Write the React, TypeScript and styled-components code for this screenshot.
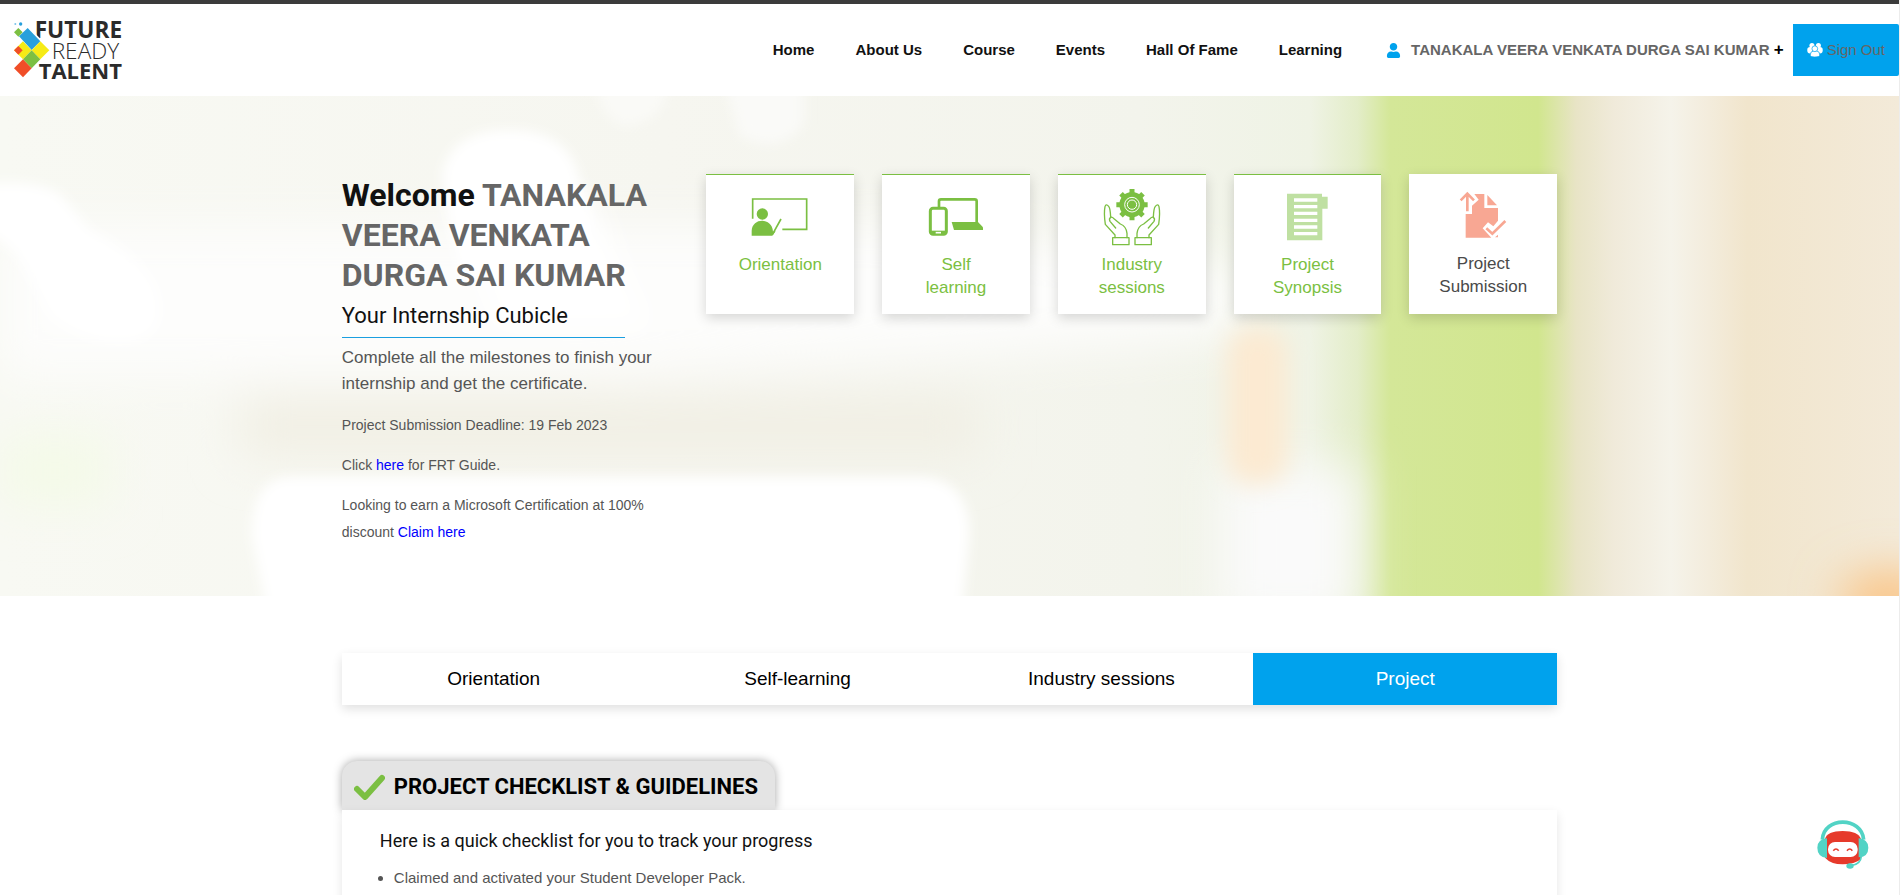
import React from "react";
import styled, { createGlobalStyle } from "styled-components";
import { FaUser } from "react-icons/fa";

const blue = "#00a2ed";
const green = "#7bbf42";

const GlobalStyle = createGlobalStyle`
  *, *::before, *::after { box-sizing: border-box; }
  html { overflow: hidden; }
  body {
    margin: 0;
    background: #fff;
    color: #555;
    font-family: "Liberation Sans", Arial, sans-serif;
    font-size: 14px;
  }
  h1, h2, h3, p, ul { margin: 0; }
  a { text-decoration: none; }
`;

const Page = styled.div`
  border-right: 1px solid #ececec;
`;

const Header = styled.header`
  display: flex;
  align-items: center;
  height: 96px;
  padding-left: 14px;
  background: #fff;
  border-top: 4px solid #3b3b3b;
`;

const LogoLink = styled.a`
  display: block;
  height: 58px;
  margin-right: auto;
  svg { overflow: visible; }
`;

const Nav = styled.nav`
  display: flex;
  gap: 41px;
  margin-right: 44px;
`;

const NavLink = styled.a`
  color: #111;
  font-size: 15px;
  font-weight: 700;
  line-height: 20px;
`;

const Account = styled.button`
  display: flex;
  align-items: center;
  gap: 4px;
  margin-right: 9px;
  padding: 0;
  border: 0;
  background: none;
  color: #666;
  font: 700 15px/20px "Liberation Sans", Arial, sans-serif;
  svg { margin-right: 6px; }
`;

const Plus = styled.span`
  color: #000;
  font-size: 17px;
`;

const SignOut = styled.button`
  display: flex;
  align-items: center;
  gap: 4px;
  height: 52px;
  padding: 0 14px;
  border: 0;
  border-radius: 0 2px 2px 0;
  background: ${blue};
  color: #666;
  font: 15px/20px "Liberation Sans", Arial, sans-serif;
`;

const Hero = styled.section`
  position: relative;
  min-height: 500px;
  padding-top: 78px;
  overflow: hidden;
`;

const Backdrop = styled.svg`
  position: absolute;
  inset: 0;
  width: 100%;
  height: 100%;
`;

const Container = styled.div`
  width: 64%;
  margin: 0 auto;
`;

const HeroRow = styled(Container)`
  position: relative;
  display: grid;
  grid-template-columns: 3fr 7fr;
  align-items: start;
`;

const Intro = styled.div`
  padding: 1px 48px 0 0;
`;

const Welcome = styled.h1`
  color: #666;
  font: 700 32px/40px Roboto, sans-serif;
  span { color: #111; }
`;

const Subtitle = styled.h2`
  width: 283px;
  padding: 7px 0;
  border-bottom: 1px solid #1a9fe0;
  color: #111;
  font: 400 22px/28px Roboto, sans-serif;
`;

const Lead = styled.p`
  padding: 7px 0 15px;
  font-size: 17px;
  line-height: 26px;
  white-space: nowrap;
`;

const Note = styled.p`
  margin-bottom: 13px;
  font-size: 14px;
  line-height: 27px;
  a { color: #00f; }
`;

const Cards = styled.div`
  display: grid;
  grid-template-columns: repeat(5, 1fr);
  gap: 28px;
`;

const Card = styled.a<{ $done: boolean }>`
  display: flex;
  flex-direction: column;
  align-items: center;
  height: 140px;
  padding-top: 13px;
  border-top: ${(p) => (p.$done ? `1px solid ${green}` : "0")};
  background: #fff;
  box-shadow: 0 4px 12px rgba(0, 0, 0, 0.16);
  color: ${(p) => (p.$done ? green : "#4a4a4a")};
  font-size: 17px;
  line-height: 23px;
  text-align: center;
  svg { margin-bottom: 7px; }
`;

const CardLabel = styled.span`
  width: 90px;
`;

const Tabs = styled(Container)`
  display: grid;
  grid-template-columns: repeat(4, 1fr);
  margin-top: 57px;
  box-shadow: 0 4px 10px rgba(0, 0, 0, 0.12);
`;

const Tab = styled.button<{ $active?: boolean }>`
  height: 52px;
  padding: 0;
  border: 0;
  background: ${(p) => (p.$active ? blue : "#fff")};
  color: ${(p) => (p.$active ? "#fff" : "#000")};
  font: 19px/24px "Liberation Sans", Arial, sans-serif;
`;

const Checklist = styled(Container)`
  margin-top: 56px;
`;

const ChecklistTitle = styled.h2`
  display: flex;
  align-items: center;
  gap: 9px;
  width: 433px;
  height: 49px;
  padding: 3px 0 0 12px;
  border-radius: 15px 15px 0 0;
  background: #e4e4e4;
  box-shadow: 0 0 10px rgba(0, 0, 0, 0.35);
  color: #000;
  font: 700 22px/28px Roboto, sans-serif;
  white-space: nowrap;
`;

const Panel = styled.div`
  position: relative;
  padding: 18px 38px 40px;
  background: #fff;
  box-shadow: 0 4px 10px rgba(0, 0, 0, 0.1);
`;

const PanelTitle = styled.h3`
  color: #111;
  font: 400 18px/26px Roboto, sans-serif;
`;

const List = styled.ul`
  padding: 11px 0 0 14px;
  font-size: 15px;
  line-height: 26px;
`;

const ChatButton = styled.button`
  position: fixed;
  right: 31px;
  bottom: 24px;
  width: 52px;
  height: 52px;
  padding: 0;
  border: 0;
  background: none;
`;

const Logo = () => (
  <svg width="108" height="58" viewBox="42 66 324 174" role="img" aria-label="Future Ready Talent">
    <g fill="#2b2b2b" fontFamily="'Open Sans', sans-serif">
      <text x="104" y="118" fontSize="68" fontWeight="700">FUTURE</text>
      <text x="155" y="179" fontSize="68" fontWeight="300">READY</text>
      <text x="116" y="239" fontSize="66" fontWeight="700">TALENT</text>
    </g>
    <path d="M83 80 155 154 69 242 34 208Z" fill="#fff" />
    <path d="m83 87 38 40-26 26-38-41z" fill="#28a0dc" />
    <path d="m121 127 27 27-27 27-26-27z" fill="#f6eb16" />
    <path d="m69 127 26 27-26 27-27-27z" fill="#f6eb16" />
    <path d="m55 141 13 13-13 13-13-13z" fill="#f04e28" />
    <path d="m95 154 26 27-26 27-26-27z" fill="#7cbf42" />
    <path d="m69 181 26 27-26 27-27-27z" fill="#f04e28" />
    <path d="m55 87 13 13-13 13-13-13z" fill="#7cbf42" />
    <circle cx="62" cy="75" r="5" fill="#28a0dc" />
    <circle cx="46" cy="75" r="3" fill="#7cc4ea" />
  </svg>
);

const PeopleIcon = () => (
  <svg width="16" height="14" viewBox="0 0 43 39" fill="#fff" aria-hidden="true">
    <circle cx="13" cy="7" r="7" />
    <circle cx="31" cy="7" r="7" />
    <rect x="0" y="11" width="21" height="18" rx="8" />
    <rect x="22" y="11" width="21" height="18" rx="8" />
    <g stroke={blue} strokeWidth="2">
      <path d="M8 34Q8 23 18 22H26Q35 23 35 34Q34 39 21 39Q9 39 8 34Z" />
      <circle cx="21" cy="16" r="8" />
    </g>
  </svg>
);

const OrientationIcon = () => (
  <svg width="60" height="58" viewBox="181 84 180 174" fill="none" stroke={green} strokeWidth="5">
    <path d="M189 176V117H351V208H278M248 224 274 177" />
    <g fill={green} stroke="none">
      <circle cx="218" cy="162" r="17" />
      <path d="M186 227V212C188 172 248 172 250 215L258 214 248 227Z" />
    </g>
  </svg>
);

const DevicesIcon = () => (
  <svg width="60" height="58" viewBox="708 84 180 174" fill="none" stroke={green}>
    <path d="M747 145V124Q747 118 753 118H854Q860 118 860 124V188" strokeWidth="8" />
    <rect x="721" y="145" width="48" height="78" rx="8" strokeWidth="9" />
    <path d="M721 212H769V223H721Z" fill={green} stroke="none" />
    <path d="M737 218H753" stroke="#fff" strokeWidth="5" />
    <path d="M785 186H864L879 202V210H792Z" fill={green} stroke="none" />
  </svg>
);

const Hand = () => (
  <g fill="none" stroke={green} strokeWidth="4" strokeLinejoin="round" strokeLinecap="round">
    <path d="M1268 233H1317V254H1268Z" />
    <path d="M1275 233V225L1246 193Q1241 160 1245 140Q1248 130 1256 139Q1261 145 1262 172Q1266 170 1272 176L1291 192Q1309 199 1311 220V233" />
    <path d="M1262 172Q1256 176 1260 184L1277 204" />
  </g>
);

const SessionsIcon = () => (
  <svg width="60" height="58" viewBox="1236 84 180 174">
    <Hand />
    <g transform="translate(2652 0) scale(-1 1)"><Hand /></g>
    <circle cx="1326" cy="134" r="38" fill={green} />
    <g stroke={green} strokeWidth="15">
      <path d="M1326 87V181M1279 134H1373M1293 101 1359 167M1359 101 1293 167" />
    </g>
    <circle cx="1326" cy="134" r="22" fill={green} stroke="#fff" strokeWidth="3" />
    <circle cx="1326" cy="134" r="14" fill={green} stroke="#fff" strokeWidth="3" />
  </svg>
);

const SynopsisIcon = () => (
  <svg width="60" height="58" viewBox="443 84 180 174">
    <path d="M470 101H575V110H592V146H576V241H470Z" fill="#bfe0a2" />
    <path d="M491 120H561M491 140H561M491 160H561M491 181H561M491 201H561M491 221H561" stroke="#fff" strokeWidth="10" />
  </svg>
);

const SubmissionIcon = () => (
  <svg width="60" height="58" viewBox="969 84 180 174">
    <path d="M1007 236V165H1026V140L1046 122 1033 105H1063V147H1104V185L1090 202 1074 190 1058 208 1084 236ZM1072 108 1101 139H1072ZM1095 235 1104 227V235Z" fill="#f8a793" />
    <path d="M1012 157V105M992 124 1012 104 1032 124" stroke="#f8a793" strokeWidth="8" fill="none" />
    <path d="M1069 208 1087 224 1126 186" stroke="#f8a793" strokeWidth="8" fill="none" />
  </svg>
);

const CheckIcon = () => (
  <svg width="31" height="26" viewBox="0 0 31 26" fill="none" aria-hidden="true">
    <path d="M3 15 11 23 28 4" stroke={green} strokeWidth="6" strokeLinecap="round" strokeLinejoin="round" />
  </svg>
);

const ChatBot = () => (
  <svg width="52" height="52" viewBox="110 88 156 156" aria-hidden="true">
    <path d="M134 148Q140 124 187 124Q234 124 242 148V208Q224 224 187 224Q152 224 134 204Z" fill="#e63a2b" />
    <rect x="143" y="157" width="89" height="45" rx="21" fill="#fff" />
    <path d="M159 183Q167 173 175 183M200 183Q208 173 216 183" stroke="#e63a2b" strokeWidth="5" fill="none" />
    <path d="M126 150C130 80 244 80 250 150" stroke="#52d3c5" strokeWidth="11" fill="none" />
    <path d="M140 146V205Q111 202 111 174Q112 148 140 146ZM235 146V203Q264 202 264 174Q263 148 235 146Z" fill="#52d3c5" />
    <path d="M243 200Q241 224 212 228" stroke="#52d3c5" strokeWidth="5" fill="none" />
    <ellipse cx="209" cy="229" rx="11" ry="8" fill="#52d3c5" />
  </svg>
);

const HeroBackdrop = () => (
  <Backdrop viewBox="0 0 1900 500" preserveAspectRatio="none" aria-hidden="true">
    <defs>
      <linearGradient id="base">
        <stop offset="0" stopColor="#f8f9f3" />
        <stop offset="0.35" stopColor="#f6f6f0" />
        <stop offset="0.6" stopColor="#f3f4ec" />
        <stop offset="0.69" stopColor="#eff3e5" />
        <stop offset="0.715" stopColor="#e3edc8" />
        <stop offset="0.732" stopColor="#d4e798" />
        <stop offset="0.81" stopColor="#d1e68e" />
        <stop offset="0.83" stopColor="#e8e4c6" />
        <stop offset="0.85" stopColor="#f0eada" />
        <stop offset="0.88" stopColor="#f5f3ea" />
        <stop offset="0.9" stopColor="#f3ecdc" />
        <stop offset="0.92" stopColor="#f1e5cc" />
        <stop offset="1" stopColor="#f3ead9" />
      </linearGradient>
      <filter id="soft" x="-30%" y="-30%" width="160%" height="160%"><feGaussianBlur stdDeviation="6" /></filter>
      <filter id="medium" x="-60%" y="-30%" width="220%" height="160%"><feGaussianBlur stdDeviation="12" /></filter>
      <filter id="haze" x="-30%" y="-60%" width="160%" height="220%"><feGaussianBlur stdDeviation="24" /></filter>
    </defs>
    <rect width="1900" height="500" fill="url(#base)" />
    <g filter="url(#haze)">
      <path d="M0 130H900L1240 170V240L980 260 600 280H0Z" fill="#fdfdfc" />
      <rect x="240" y="300" width="740" height="60" fill="#f1efe4" />
      <rect x="0" y="340" width="110" height="70" fill="#f4fae8" />
      <ellipse cx="1890" cy="505" rx="50" ry="28" fill="#fbc07c" />
      <rect x="1220" y="370" width="140" height="160" fill="#fafafa" />
    </g>
    <g filter="url(#medium)">
      <rect x="1228" y="232" width="60" height="156" rx="24" fill="#fcead2" />
      <path d="M450 100H590L650 230H500Z" fill="#fff" />
    </g>
    <g filter="url(#soft)">
      <path d="M-20 89Q30 82 60 98L90 134Q150 165 158 200Q168 244 120 246Q80 245 50 220L24 170Q10 145 -20 135Z" fill="#fff" />
      <path d="M442 80Q450 34 510 34Q570 34 580 84Q600 150 590 180H460Z" fill="#fff" />
      <path d="M726 -10H804V28Q780 60 740 40Z" fill="#fafaf8" />
      <path d="M597 -10H668Q664 26 625 30Q600 20 597 -10Z" fill="#fafaf7" />
      <path d="M252 440Q252 382 290 381H920Q970 382 970 440L962 520H268Z" fill="#fff" />
    </g>
  </Backdrop>
);

const cards = [
  { label: "Orientation", icon: <OrientationIcon />, done: true },
  { label: "Self learning", icon: <DevicesIcon />, done: true },
  { label: "Industry sessions", icon: <SessionsIcon />, done: true },
  { label: "Project Synopsis", icon: <SynopsisIcon />, done: true },
  { label: "Project Submission", icon: <SubmissionIcon />, done: false },
];

const navItems = ["Home", "About Us", "Course", "Events", "Hall Of Fame", "Learning"];
const tabs = ["Orientation", "Self-learning", "Industry sessions", "Project"];

export default function App() {
  return (
    <Page>
      <GlobalStyle />
      <Header>
        <LogoLink href="#"><Logo /></LogoLink>
        <Nav>
          {navItems.map((item) => <NavLink key={item} href="#">{item}</NavLink>)}
        </Nav>
        <Account type="button">
          <FaUser size={15} color={blue} />
          TANAKALA VEERA VENKATA DURGA SAI KUMAR <Plus>+</Plus>
        </Account>
        <SignOut type="button"><PeopleIcon />Sign Out</SignOut>
      </Header>
      <main>
        <Hero>
          <HeroBackdrop />
          <HeroRow>
            <Intro>
              <Welcome><span>Welcome</span> TANAKALA VEERA VENKATA DURGA SAI KUMAR</Welcome>
              <Subtitle>Your Internship Cubicle</Subtitle>
              <Lead>Complete all the milestones to finish your<br />internship and get the certificate.</Lead>
              <Note>Project Submission Deadline: 19 Feb 2023</Note>
              <Note>Click <a href="#">here</a> for FRT Guide.</Note>
              <Note>Looking to earn a Microsoft Certification at 100% discount <a href="#">Claim here</a></Note>
            </Intro>
            <Cards>
              {cards.map((card) => (
                <Card key={card.label} href="#" $done={card.done}>
                  {card.icon}
                  <CardLabel>{card.label}</CardLabel>
                </Card>
              ))}
            </Cards>
          </HeroRow>
        </Hero>
        <Tabs role="tablist">
          {tabs.map((tab) => (
            <Tab key={tab} type="button" role="tab" aria-selected={tab === "Project"} $active={tab === "Project"}>
              {tab}
            </Tab>
          ))}
        </Tabs>
        <Checklist>
          <ChecklistTitle><CheckIcon />PROJECT CHECKLIST &amp; GUIDELINES</ChecklistTitle>
          <Panel>
            <PanelTitle>Here is a quick checklist for you to track your progress</PanelTitle>
            <List>
              <li>Claimed and activated your Student Developer Pack.</li>
            </List>
          </Panel>
        </Checklist>
      </main>
      <ChatButton type="button" aria-label="Open chat"><ChatBot /></ChatButton>
    </Page>
  );
}
